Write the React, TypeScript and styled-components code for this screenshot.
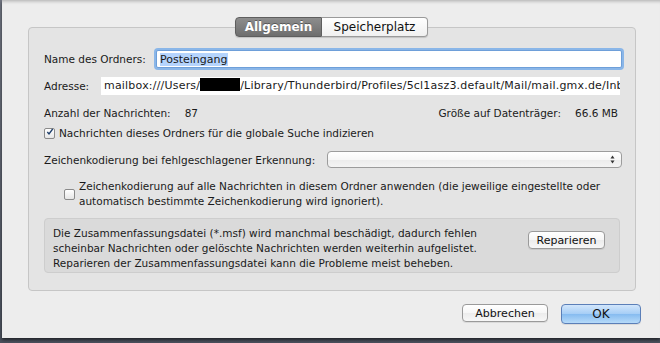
import React from "react";
import styled, { createGlobalStyle } from "styled-components";

const Global = createGlobalStyle`
  html, body { margin: 0; padding: 0; }
  body {
    background: #3b4250;
    font-family: "DejaVu Sans", "Liberation Sans", sans-serif;
    font-size: 10.5px;
    color: #1a1a1a;
    overflow: hidden;
  }
`;

const Screen = styled.div`
  width: 660px;
  height: 343px;
  padding-left: 2px;
  box-sizing: border-box;
  background: linear-gradient(to bottom, #6f7480, #4a505c);
`;

const Window = styled.div`
  width: 658px;
  height: 338px;
  box-sizing: border-box;
  background: #ededed;
  border-top: 1px solid #c4c4c4;
  box-shadow: 0 2px 3px rgba(0, 0, 0, 0.55), inset 0 3px 3px -2px rgba(0, 0, 0, 0.18);
  padding: 26px 0 0 26px;
  display: flex;
  flex-direction: column;
`;

const Group = styled.div`
  position: relative;
  width: 608px;
  height: 264px;
  box-sizing: border-box;
  border: 1px solid #c6c6c6;
  border-radius: 4px;
  background: #e4e4e4;
  padding: 22px 13px 0 15px;
  display: flex;
  flex-direction: column;
`;

const Tabs = styled.div`
  position: absolute;
  top: -11px;
  left: 206px;
  display: flex;
  height: 20px;
  border-radius: 4px;
  box-shadow: 0 1px 1px rgba(0, 0, 0, 0.15);
`;

const Tab = styled.div<{ $active?: boolean }>`
  height: 20px;
  box-sizing: border-box;
  display: flex;
  align-items: center;
  justify-content: center;
  width: ${(p) => (p.$active ? "87px" : "106px")};
  font-size: 12px;
  font-weight: ${(p) => (p.$active ? "bold" : "normal")};
  color: ${(p) => (p.$active ? "#ffffff" : "#111")};
  text-shadow: ${(p) => (p.$active ? "0 -1px 0 rgba(0,0,0,0.35)" : "none")};
  background: ${(p) =>
    p.$active
      ? "linear-gradient(to bottom, #8d8d8d, #6e6e6e)"
      : "linear-gradient(to bottom, #ffffff, #f0f0f0)"};
  border: 1px solid ${(p) => (p.$active ? "#5e5e5e" : "#9a9a9a")};
  border-radius: ${(p) => (p.$active ? "4px 0 0 4px" : "0 4px 4px 0")};
  border-left-width: ${(p) => (p.$active ? "1px" : "0")};
`;

const Row = styled.div<{ $mt?: number; $pr?: number }>`
  display: flex;
  align-items: center;
  margin-top: ${(p) => p.$mt ?? 0}px;
  padding-right: ${(p) => p.$pr ?? 0}px;
`;

const Label = styled.span<{ $w?: number }>`
  white-space: nowrap;
  width: ${(p) => (p.$w ? `${p.$w}px` : "auto")};
  flex: none;
`;

const FocusInput = styled.div`
  flex: 1;
  height: 16px;
  display: flex;
  align-items: center;
  padding: 0 3px;
  background: #fff;
  border: 1px solid #6e9fd9;
  box-shadow: 0 0 0 2px #8ab6e8;
  border-radius: 2px;
  margin: 0 0 0 4px;
`;

const Selected = styled.span`
  background: #b5d4fd;
  font-size: 11px;
`;

const PathField = styled.div`
  flex: 1;
  min-width: 0;
  height: 18px;
  line-height: 18px;
  padding-left: 3px;
  background: #fff;
  overflow: hidden;
  white-space: nowrap;
  font-size: 11px;
  letter-spacing: 0.2px;
  margin-right: 2px;
`;

const Redact = styled.span`
  display: inline-block;
  width: 40px;
  height: 13px;
  background: #000;
  vertical-align: -2px;
`;

const Spacer = styled.div`
  flex: 1;
`;

const Value = styled.span`
  margin-left: 14px;
`;

const Box = styled.span`
  width: 11px;
  height: 11px;
  flex: none;
  box-sizing: border-box;
  border: 1px solid #8a8a8a;
  border-radius: 2px;
  background: linear-gradient(to bottom, #ffffff, #e6e6e6);
  margin-right: 4px;
  display: flex;
  align-items: center;
  justify-content: center;
  overflow: visible;
`;

const Select = styled.div`
  flex: 1;
  height: 17px;
  box-sizing: border-box;
  margin-left: 12px;
  border: 1px solid #9c9c9c;
  border-radius: 4px;
  background: linear-gradient(to bottom, #ffffff 0%, #f7f7f7 50%, #ececec 51%, #f4f4f4 100%);
  display: flex;
  align-items: center;
  justify-content: flex-end;
  padding-right: 6px;
`;

const Indent = styled.div`
  display: flex;
  align-items: center;
  margin-top: 11px;
  padding-left: 20px;
`;

const Lines = styled.div`
  line-height: 15px;
`;

const Notice = styled.div`
  margin-top: 9px;
  width: 576px;
  height: 55px;
  box-sizing: border-box;
  border: 1px solid #cdcdcd;
  border-radius: 4px;
  background: #dadada;
  padding: 7px 14px 0 8px;
  display: flex;
  align-items: flex-start;
  justify-content: space-between;
`;

const Button = styled.button<{ $primary?: boolean; $w: number; $mt?: number }>`
  font-family: inherit;
  font-size: ${(p) => (p.$primary ? "12px" : "11px")};
  width: ${(p) => p.$w}px;
  height: ${(p) => (p.$primary ? 20 : 18)}px;
  margin-top: ${(p) => p.$mt ?? 0}px;
  border-radius: 4px;
  border: 1px solid ${(p) => (p.$primary ? "#5b7fb8" : "#9a9a9a")};
  color: #111;
  padding: 0;
  background: ${(p) =>
    p.$primary
      ? "linear-gradient(to bottom, #d2e6fb 0%, #a5cdf6 50%, #86bbf0 51%, #b6daf9 100%)"
      : "linear-gradient(to bottom, #ffffff 0%, #f6f6f6 50%, #ececec 51%, #f7f7f7 100%)"};
  box-shadow: 0 1px 0 rgba(0, 0, 0, 0.08);
`;

const Footer = styled.div`
  display: flex;
  justify-content: flex-end;
  gap: 13px;
  margin-top: 13px;
  padding-right: 19px;
`;

const Arrows = () => (
  <svg width="5" height="9" viewBox="0 0 5 9">
    <path d="M2.5 0.5 L4.5 3.5 H0.5 Z" fill="#333" />
    <path d="M2.5 8.5 L4.5 5.5 H0.5 Z" fill="#333" />
  </svg>
);

const Check = () => (
  <svg width="12" height="12" viewBox="0 0 12 12" style={{ marginTop: -2, marginLeft: 1 }}>
    <path d="M2 6 L4.5 9 L10 1.5" stroke="#1e3e6a" strokeWidth="2" fill="none" />
  </svg>
);

export default function App() {
  return (
    <>
      <Global />
      <Screen>
        <Window>
          <Group>
            <Tabs>
              <Tab $active>Allgemein</Tab>
              <Tab>Speicherplatz</Tab>
            </Tabs>
            <Row>
              <Label $w={108}>Name des Ordners:</Label>
              <FocusInput>
                <Selected>Posteingang</Selected>
              </FocusInput>
            </Row>
            <Row $mt={9}>
              <Label $w={57}>Adresse:</Label>
              <PathField>
                mailbox:///Users/<Redact />/Library/Thunderbird/Profiles/5cl1asz3.default/Mail/mail.gmx.de/Inbox
              </PathField>
            </Row>
            <Row $mt={12} $pr={4}>
              <Label>Anzahl der Nachrichten:</Label>
              <Value>87</Value>
              <Spacer />
              <Label>Größe auf Datenträger:</Label>
              <Value>66.6 MB</Value>
            </Row>
            <Row $mt={8}>
              <Box>
                <Check />
              </Box>
              <Label>Nachrichten dieses Ordners für die globale Suche indizieren</Label>
            </Row>
            <Row $mt={12}>
              <Label>Zeichenkodierung bei fehlgeschlagener Erkennung:</Label>
              <Select>
                <Arrows />
              </Select>
            </Row>
            <Indent>
              <Box />
              <Lines>
                Zeichenkodierung auf alle Nachrichten in diesem Ordner anwenden (die jeweilige eingestellte oder
                <br />
                automatisch bestimmte Zeichenkodierung wird ignoriert).
              </Lines>
            </Indent>
            <Notice>
              <Lines>
                Die Zusammenfassungsdatei (*.msf) wird manchmal beschädigt, dadurch fehlen
                <br />
                scheinbar Nachrichten oder gelöschte Nachrichten werden weiterhin aufgelistet.
                <br />
                Reparieren der Zusammenfassungsdatei kann die Probleme meist beheben.
              </Lines>
              <Button $w={77} $mt={5}>
                Reparieren
              </Button>
            </Notice>
          </Group>
          <Footer>
            <Button $w={86}>Abbrechen</Button>
            <Button $w={80} $primary>
              OK
            </Button>
          </Footer>
        </Window>
      </Screen>
    </>
  );
}
